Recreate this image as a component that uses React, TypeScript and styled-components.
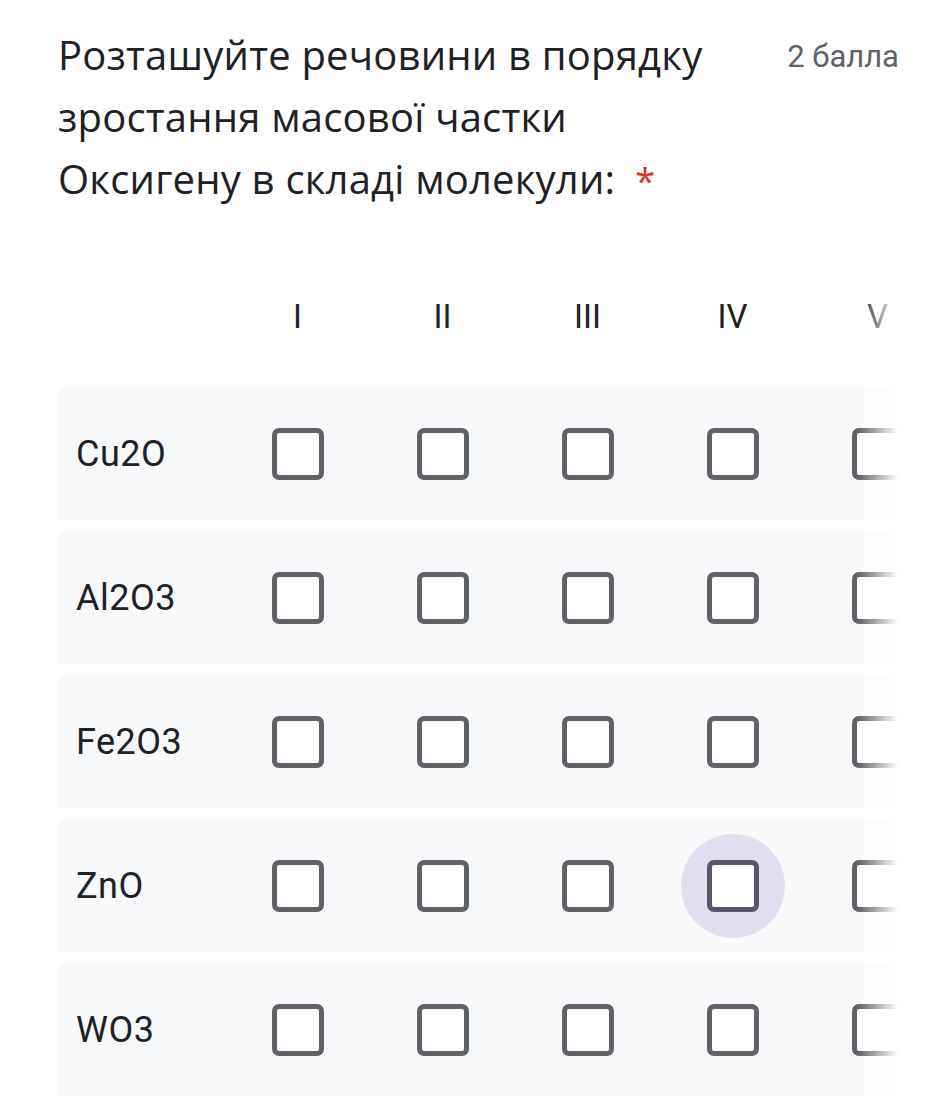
import React from "react";
import styled, { createGlobalStyle } from "styled-components";

const Global = createGlobalStyle`
  html, body { margin: 0; padding: 0; background: #ffffff; }
  body { font-family: Roboto, "Noto Sans", sans-serif; color: #202124; }
`;

const Page = styled.div`
  width: 949px;
  padding: 24px 0 0 58px;
  box-sizing: border-box;
`;

const Header = styled.div`
  display: flex;
  align-items: flex-start;
  justify-content: space-between;
  padding-right: 50px;
`;

const Title = styled.div`
  width: 670px;
  font-family: "Open Sans", Roboto, sans-serif;
  font-size: 40px;
  line-height: 62px;
  letter-spacing: 0.2px;
  color: #202124;
`;

const Required = styled.span`
  display: inline-block;
  color: #d93025;
  margin-left: 20px;
  font-size: 36px;
  line-height: 1;
`;

const Points = styled.div`
  font-family: Roboto, sans-serif;
  font-size: 31px;
  line-height: 62px;
  margin-top: 2px;
  color: #5f6368;
  white-space: nowrap;
`;

const TableWrap = styled.div`
  position: relative;
  width: 840px;
  margin-top: 84px;
  overflow: hidden;
`;

const Fade = styled.div`
  position: absolute;
  top: 0;
  right: 0;
  bottom: 0;
  width: 40px;
  background: linear-gradient(to right, rgba(255, 255, 255, 0), #ffffff);
  pointer-events: none;
`;

const Grid = styled.div`
  display: grid;
  grid-template-columns: 167px repeat(5, 145px);
  row-gap: 12px;
  width: max-content;
`;

const HeadCell = styled.div`
  height: 60px;
  display: flex;
  align-items: center;
  justify-content: center;
  font-size: 33px;
  color: #202124;
  margin-top: -8px;
  margin-bottom: 30px;
`;

const RowLabel = styled.div`
  height: 132px;
  display: flex;
  align-items: center;
  padding-left: 18px;
  background: #f8f9fa;
  border-radius: 4px 0 0 4px;
  border-right: 2px solid #fdfdfd;
  font-size: 36px;
  letter-spacing: 0.5px;
  color: #202124;
`;

const Cell = styled.div`
  height: 132px;
  display: flex;
  align-items: center;
  justify-content: center;
  background: #f8f9fa;
`;

const Halo = styled.div<{ $active?: boolean }>`
  width: 104px;
  height: 104px;
  border-radius: 50%;
  display: flex;
  align-items: center;
  justify-content: center;
  background: ${(p) => (p.$active ? "#e2def0" : "transparent")};
`;

const Box = styled.div<{ $active?: boolean }>`
  width: 52px;
  height: 52px;
  box-sizing: border-box;
  border: 5px solid ${(p) => (p.$active ? "#5c566c" : "#5f6368")};
  border-radius: 7px;
  background: #ffffff;
`;

const cols = ["I", "II", "III", "IV", "V"];
const rows = ["Cu2O", "Al2O3", "Fe2O3", "ZnO", "WO3"];

export default function App() {
  return (
    <>
      <Global />
      <Page>
        <Header>
          <Title>
            Розташуйте речовини в порядку зростання масової частки Оксигену в
            складі молекули:<Required>*</Required>
          </Title>
          <Points>2 балла</Points>
        </Header>
        <TableWrap>
          <Grid>
            <HeadCell />
            {cols.map((c) => (
              <HeadCell key={c}>{c}</HeadCell>
            ))}
            {rows.map((r, ri) => (
              <React.Fragment key={r}>
                <RowLabel>{r}</RowLabel>
                {cols.map((c, ci) => {
                  const active = ri === 3 && ci === 3;
                  return (
                    <Cell key={c}>
                      <Halo $active={active}>
                        <Box $active={active} />
                      </Halo>
                    </Cell>
                  );
                })}
              </React.Fragment>
            ))}
          </Grid>
          <Fade />
        </TableWrap>
      </Page>
    </>
  );
}
